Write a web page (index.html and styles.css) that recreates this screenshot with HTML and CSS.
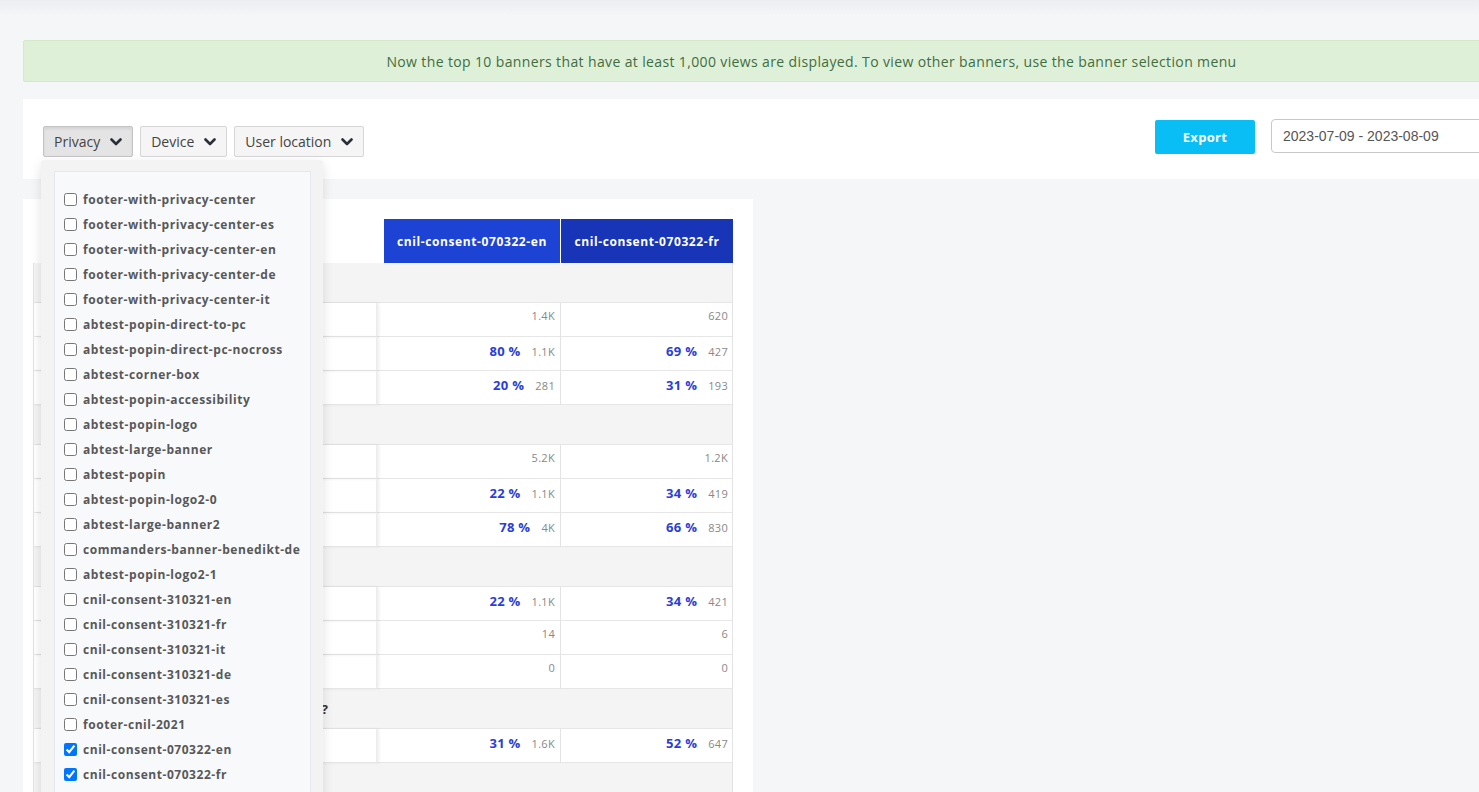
FILE: index.html
```html
<!DOCTYPE html>
<html lang="en">
<head>
<meta charset="utf-8">
<title>Banner statistics</title>
<link rel="stylesheet" href="styles.css">
</head>
<body>
<div class="page">
  <div class="alert">Now the top 10 banners that have at least 1,000 views are displayed. To view other banners, use the banner selection menu</div>

  <div class="card filters">
    <div class="filter-group">
      <button class="fbtn active">Privacy <svg class="chev" viewBox="0 0 12 8" width="12" height="8"><path d="M1.5 1.5 L6 6 L10.5 1.5"/></svg></button>
      <button class="fbtn">Device <svg class="chev" viewBox="0 0 12 8" width="12" height="8"><path d="M1.5 1.5 L6 6 L10.5 1.5"/></svg></button>
      <button class="fbtn">User location <svg class="chev" viewBox="0 0 12 8" width="12" height="8"><path d="M1.5 1.5 L6 6 L10.5 1.5"/></svg></button>
    </div>
    <div class="actions">
      <button class="export">Export</button>
      <input class="date" type="text" value="2023-07-09 - 2023-08-09">
    </div>

    <div class="dropdown">
      <ul class="dd-list">
        <li><label><input type="checkbox"><span>footer-with-privacy-center</span></label></li>
        <li><label><input type="checkbox"><span>footer-with-privacy-center-es</span></label></li>
        <li><label><input type="checkbox"><span>footer-with-privacy-center-en</span></label></li>
        <li><label><input type="checkbox"><span>footer-with-privacy-center-de</span></label></li>
        <li><label><input type="checkbox"><span>footer-with-privacy-center-it</span></label></li>
        <li><label><input type="checkbox"><span>abtest-popin-direct-to-pc</span></label></li>
        <li><label><input type="checkbox"><span>abtest-popin-direct-pc-nocross</span></label></li>
        <li><label><input type="checkbox"><span>abtest-corner-box</span></label></li>
        <li><label><input type="checkbox"><span>abtest-popin-accessibility</span></label></li>
        <li><label><input type="checkbox"><span>abtest-popin-logo</span></label></li>
        <li><label><input type="checkbox"><span>abtest-large-banner</span></label></li>
        <li><label><input type="checkbox"><span>abtest-popin</span></label></li>
        <li><label><input type="checkbox"><span>abtest-popin-logo2-0</span></label></li>
        <li><label><input type="checkbox"><span>abtest-large-banner2</span></label></li>
        <li><label><input type="checkbox"><span>commanders-banner-benedikt-de</span></label></li>
        <li><label><input type="checkbox"><span>abtest-popin-logo2-1</span></label></li>
        <li><label><input type="checkbox"><span>cnil-consent-310321-en</span></label></li>
        <li><label><input type="checkbox"><span>cnil-consent-310321-fr</span></label></li>
        <li><label><input type="checkbox"><span>cnil-consent-310321-it</span></label></li>
        <li><label><input type="checkbox"><span>cnil-consent-310321-de</span></label></li>
        <li><label><input type="checkbox"><span>cnil-consent-310321-es</span></label></li>
        <li><label><input type="checkbox"><span>footer-cnil-2021</span></label></li>
        <li><label><input type="checkbox" checked><span>cnil-consent-070322-en</span></label></li>
        <li><label><input type="checkbox" checked><span>cnil-consent-070322-fr</span></label></li>
      </ul>
    </div>
  </div>

  <div class="card table-card">
    <div class="tbl">
      <div class="thead">
        <div class="th-blank"></div>
        <div class="th th-a">cnil-consent-070322-en</div>
        <div class="th th-b">cnil-consent-070322-fr</div>
      </div>

      <div class="section">Banner displays</div>
      <div class="row"><div class="label">Views</div><div class="cell c1"><span class="cnt">1.4K</span></div><div class="cell c2"><span class="cnt">620</span></div></div>
      <div class="row"><div class="label">Interactions</div><div class="cell c1"><span class="pct">80 %</span><span class="cnt">1.1K</span></div><div class="cell c2"><span class="pct">69 %</span><span class="cnt">427</span></div></div>
      <div class="row"><div class="label">No interaction</div><div class="cell c1"><span class="pct">20 %</span><span class="cnt">281</span></div><div class="cell c2"><span class="pct">31 %</span><span class="cnt">193</span></div></div>

      <div class="section">Consent</div>
      <div class="row"><div class="label">Choices</div><div class="cell c1"><span class="cnt">5.2K</span></div><div class="cell c2"><span class="cnt">1.2K</span></div></div>
      <div class="row"><div class="label">Accept</div><div class="cell c1"><span class="pct">22 %</span><span class="cnt">1.1K</span></div><div class="cell c2"><span class="pct">34 %</span><span class="cnt">419</span></div></div>
      <div class="row"><div class="label">Refuse</div><div class="cell c1"><span class="pct">78 %</span><span class="cnt">4K</span></div><div class="cell c2"><span class="pct">66 %</span><span class="cnt">830</span></div></div>

      <div class="section">Buttons</div>
      <div class="row"><div class="label">Accept all</div><div class="cell c1"><span class="pct">22 %</span><span class="cnt">1.1K</span></div><div class="cell c2"><span class="pct">34 %</span><span class="cnt">421</span></div></div>
      <div class="row"><div class="label">Privacy center</div><div class="cell c1"><span class="cnt">14</span></div><div class="cell c2"><span class="cnt">6</span></div></div>
      <div class="row"><div class="label">Close</div><div class="cell c1"><span class="cnt">0</span></div><div class="cell c2"><span class="cnt">0</span></div></div>

      <div class="section">How many users changed their preferences?</div>
      <div class="row"><div class="label">Changed</div><div class="cell c1"><span class="pct">31 %</span><span class="cnt">1.6K</span></div><div class="cell c2"><span class="pct">52 %</span><span class="cnt">647</span></div></div>

      <div class="section">Purposes</div>
      <div class="row"><div class="label">Analytics</div><div class="cell c1"><span class="cnt">0</span></div><div class="cell c2"><span class="cnt">0</span></div></div>
    </div>
  </div>
</div>
</body>
</html>
```

FILE: styles.css
```css
* { box-sizing: border-box; }

html, body {
  margin: 0;
  padding: 0;
  overflow: hidden;
}

body {
  background: #f5f6f8 linear-gradient(to bottom, #ecedf0 0px, #f5f6f8 16px) no-repeat;
  font-family: "Open Sans", "Liberation Sans", sans-serif;
  color: #333;
}

.page {
  width: 1600px;
  padding: 40px 0 0 23px;
}

.alert {
  width: 1577px;
  height: 42px;
  background: #dff0d8;
  border: 1px solid #d3e9c8;
  border-radius: 2px;
  color: #3f6d42;
  font-size: 14px;
  letter-spacing: 0.37px;
  display: flex;
  align-items: center;
  justify-content: center;
  margin-bottom: 17px;
}

.card {
  background: #fff;
}

.filters {
  position: relative;
  width: 1577px;
  height: 80px;
  padding: 20px 20px;
  display: flex;
  justify-content: space-between;
  align-items: flex-start;
  margin-bottom: 20px;
}

.filter-group {
  display: flex;
  gap: 7px;
  margin-top: 7px;
}

.fbtn {
  height: 31px;
  display: flex;
  align-items: center;
  gap: 10px;
  padding: 0 10px 0 10px;
  background: #f5f5f5;
  border: 1px solid #d6d6d6;
  border-radius: 2px;
  font-family: inherit;
  font-size: 14px;
  color: #444;
}

.fbtn.active {
  background: #e4e4e4;
  border-color: #c4c4c4;
  box-shadow: inset 0 2px 3px rgba(0,0,0,0.08);
}

.chev path {
  fill: none;
  stroke: #2a2f3a;
  stroke-width: 2.6;
  stroke-linecap: round;
  stroke-linejoin: round;
}

.actions {
  display: flex;
  align-items: flex-start;
  gap: 16px;
}

.export {
  margin-top: 1px;
  width: 100px;
  height: 34px;
  border: none;
  border-radius: 2px;
  background: #09bdf5;
  color: #fff;
  font-family: inherit;
  font-weight: 700;
  font-size: 13px;
  letter-spacing: 0.3px;
}

.date {
  width: 309px;
  height: 34px;
  border: 1px solid #c8c8c8;
  border-radius: 4px;
  padding: 0 11px;
  font-family: "Liberation Sans", Arial, sans-serif;
  font-size: 14px;
  color: #555;
  margin-top: 0;
}

.dropdown {
  position: absolute;
  left: 18px;
  top: 61px;
  width: 282px;
  padding: 11px 12px 0 13px;
  background: #f3f3f3;
  box-shadow: 0 4px 12px rgba(0,0,0,0.12);
  border-radius: 3px;
  z-index: 10;
}

.dd-list {
  list-style: none;
  margin: 0;
  padding: 15px 0 30px 9px;
  background: #f7f9fb;
  border: 1px solid #e5e8ec;
}

.dd-list li {
  height: 25px;
  display: flex;
  align-items: center;
}

.dd-list label {
  display: flex;
  align-items: center;
  gap: 6px;
  font-size: 12px;
  font-weight: 700;
  letter-spacing: 0.55px;
  color: #585858;
  white-space: nowrap;
}

.dd-list input {
  margin: 0;
  width: 13px;
  height: 13px;
}

.table-card {
  width: 730px;
  padding: 20px 20px 0 10px;
  min-height: 700px;
}

.tbl {
  width: 700px;
  border-right: 1px solid #e3e3e3;
  border-left: 1px solid #e3e3e3;
}

.thead {
  display: grid;
  grid-template-columns: 351px 177px 172px;
  height: 44px;
  margin-left: -1px;
  margin-right: -1px;
  background: #fff;
}

.th {
  display: flex;
  align-items: center;
  justify-content: center;
  color: #fff;
  font-weight: 700;
  font-size: 12px;
  letter-spacing: 0.6px;
}

.th-a { background: #1c43d4; border-right: 1px solid #fff; }
.th-b { background: #1735b6; }

.section {
  height: 40px;
  background: #f4f4f4;
  border-bottom: 1px solid #e6e6e6;
  padding: 0 0 0 12px;
  display: flex;
  align-items: center;
  font-weight: 700;
  font-size: 13px;
  letter-spacing: -0.15px;
  color: #333;
  white-space: nowrap;
}

.row {
  display: grid;
  grid-template-columns: 343px 184px 172px;
  height: 34px;
  border-bottom: 1px solid #e6e6e6;
}

.label {
  padding: 8px 12px;
  font-size: 13px;
  color: #333;
  box-shadow: 2px 0 3px rgba(0,0,0,0.07);
  border-right: 1px solid #ececec;
  position: relative;
}

.cell {
  display: flex;
  justify-content: flex-end;
  align-items: baseline;
  gap: 11px;
  padding: 5px 5px 0 0;
}

.c1 { border-right: 1px solid #e3e3e3; }

.pct {
  color: #2b3dd8;
  font-weight: 700;
  font-size: 13px;
  letter-spacing: 0.3px;
}

.cnt {
  color: #888;
  font-size: 11px;
  letter-spacing: 0.3px;
}
```
